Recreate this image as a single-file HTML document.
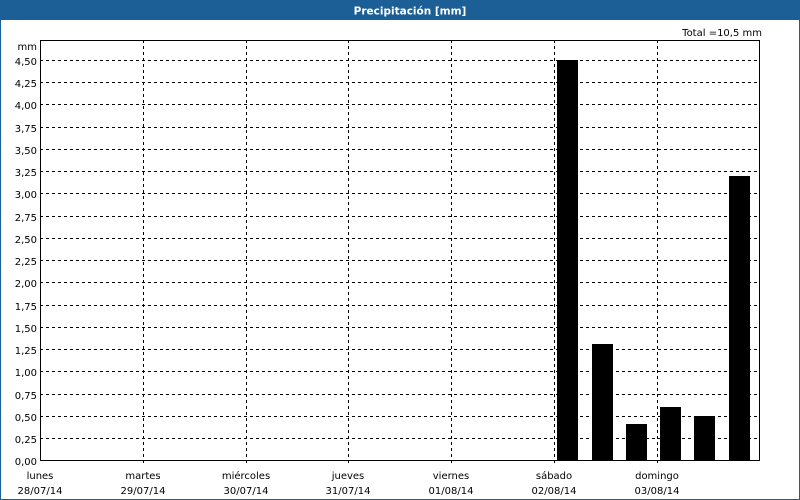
<!DOCTYPE html>
<html><head><meta charset="utf-8"><style>
html,body{margin:0;padding:0;background:#fff}
body{width:800px;height:500px;overflow:hidden;position:relative;font-family:"DejaVu Sans","Liberation Sans",sans-serif}
</style></head><body>
<svg width="800" height="500" xmlns="http://www.w3.org/2000/svg" style="position:absolute;left:0;top:0" shape-rendering="crispEdges">
<rect x="0" y="0" width="800" height="500" fill="#fff"/>
<rect x="0" y="0" width="800" height="20" fill="#1c5f96"/>
<rect x="0.5" y="0.5" width="799" height="499" fill="none" stroke="#1c5f96"/>
<text x="410" y="14.5" fill="#fff" font-size="10.5" font-weight="bold" text-anchor="middle" font-family="DejaVu Sans, Liberation Sans, sans-serif">Precipitación [mm]</text>
<text x="762" y="36" fill="#000" font-size="10" text-anchor="end" font-family="DejaVu Sans, Liberation Sans, sans-serif">Total =10,5 mm</text>
<g stroke="#000" stroke-width="1" stroke-dasharray="3,3">
<line x1="40" x2="760" y1="60.5" y2="60.5"/>
<line x1="40" x2="760" y1="82.5" y2="82.5"/>
<line x1="40" x2="760" y1="104.5" y2="104.5"/>
<line x1="40" x2="760" y1="127.5" y2="127.5"/>
<line x1="40" x2="760" y1="149.5" y2="149.5"/>
<line x1="40" x2="760" y1="171.5" y2="171.5"/>
<line x1="40" x2="760" y1="193.5" y2="193.5"/>
<line x1="40" x2="760" y1="216.5" y2="216.5"/>
<line x1="40" x2="760" y1="238.5" y2="238.5"/>
<line x1="40" x2="760" y1="260.5" y2="260.5"/>
<line x1="40" x2="760" y1="282.5" y2="282.5"/>
<line x1="40" x2="760" y1="305.5" y2="305.5"/>
<line x1="40" x2="760" y1="327.5" y2="327.5"/>
<line x1="40" x2="760" y1="349.5" y2="349.5"/>
<line x1="40" x2="760" y1="371.5" y2="371.5"/>
<line x1="40" x2="760" y1="394.5" y2="394.5"/>
<line x1="40" x2="760" y1="416.5" y2="416.5"/>
<line x1="40" x2="760" y1="438.5" y2="438.5"/>
<line x1="143.5" x2="143.5" y1="40" y2="466"/>
<line x1="246.5" x2="246.5" y1="40" y2="466"/>
<line x1="348.5" x2="348.5" y1="40" y2="466"/>
<line x1="451.5" x2="451.5" y1="40" y2="466"/>
<line x1="554.5" x2="554.5" y1="40" y2="466"/>
<line x1="657.5" x2="657.5" y1="40" y2="466"/>
</g>
<g fill="#000">
<rect x="557" y="60" width="21" height="401"/>
<rect x="592" y="344" width="21" height="117"/>
<rect x="626" y="424" width="21" height="37"/>
<rect x="660" y="407" width="21" height="54"/>
<rect x="694" y="416" width="21" height="45"/>
<rect x="729" y="176" width="21" height="285"/>
</g>
<rect x="40.5" y="40.5" width="719" height="420" fill="none" stroke="#000" stroke-width="1.2"/>
<g font-size="10" fill="#000" text-anchor="end" font-family="DejaVu Sans, Liberation Sans, sans-serif">
<text x="37" y="50">mm</text>
<text x="37" y="65">4,50</text>
<text x="37" y="87">4,25</text>
<text x="37" y="109">4,00</text>
<text x="37" y="132">3,75</text>
<text x="37" y="154">3,50</text>
<text x="37" y="176">3,25</text>
<text x="37" y="198">3,00</text>
<text x="37" y="221">2,75</text>
<text x="37" y="243">2,50</text>
<text x="37" y="265">2,25</text>
<text x="37" y="287">2,00</text>
<text x="37" y="310">1,75</text>
<text x="37" y="332">1,50</text>
<text x="37" y="354">1,25</text>
<text x="37" y="376">1,00</text>
<text x="37" y="399">0,75</text>
<text x="37" y="421">0,50</text>
<text x="37" y="443">0,25</text>
<text x="37" y="465">0,00</text>
</g>
<g font-size="10" fill="#000" text-anchor="middle" font-family="DejaVu Sans, Liberation Sans, sans-serif">
<text x="40" y="479">lunes</text><text x="40" y="494">28/07/14</text>
<text x="143" y="479">martes</text><text x="143" y="494">29/07/14</text>
<text x="246" y="479">miércoles</text><text x="246" y="494">30/07/14</text>
<text x="348" y="479">jueves</text><text x="348" y="494">31/07/14</text>
<text x="451" y="479">viernes</text><text x="451" y="494">01/08/14</text>
<text x="554" y="479">sábado</text><text x="554" y="494">02/08/14</text>
<text x="657" y="479">domingo</text><text x="657" y="494">03/08/14</text>
</g>
</svg>
</body></html>
